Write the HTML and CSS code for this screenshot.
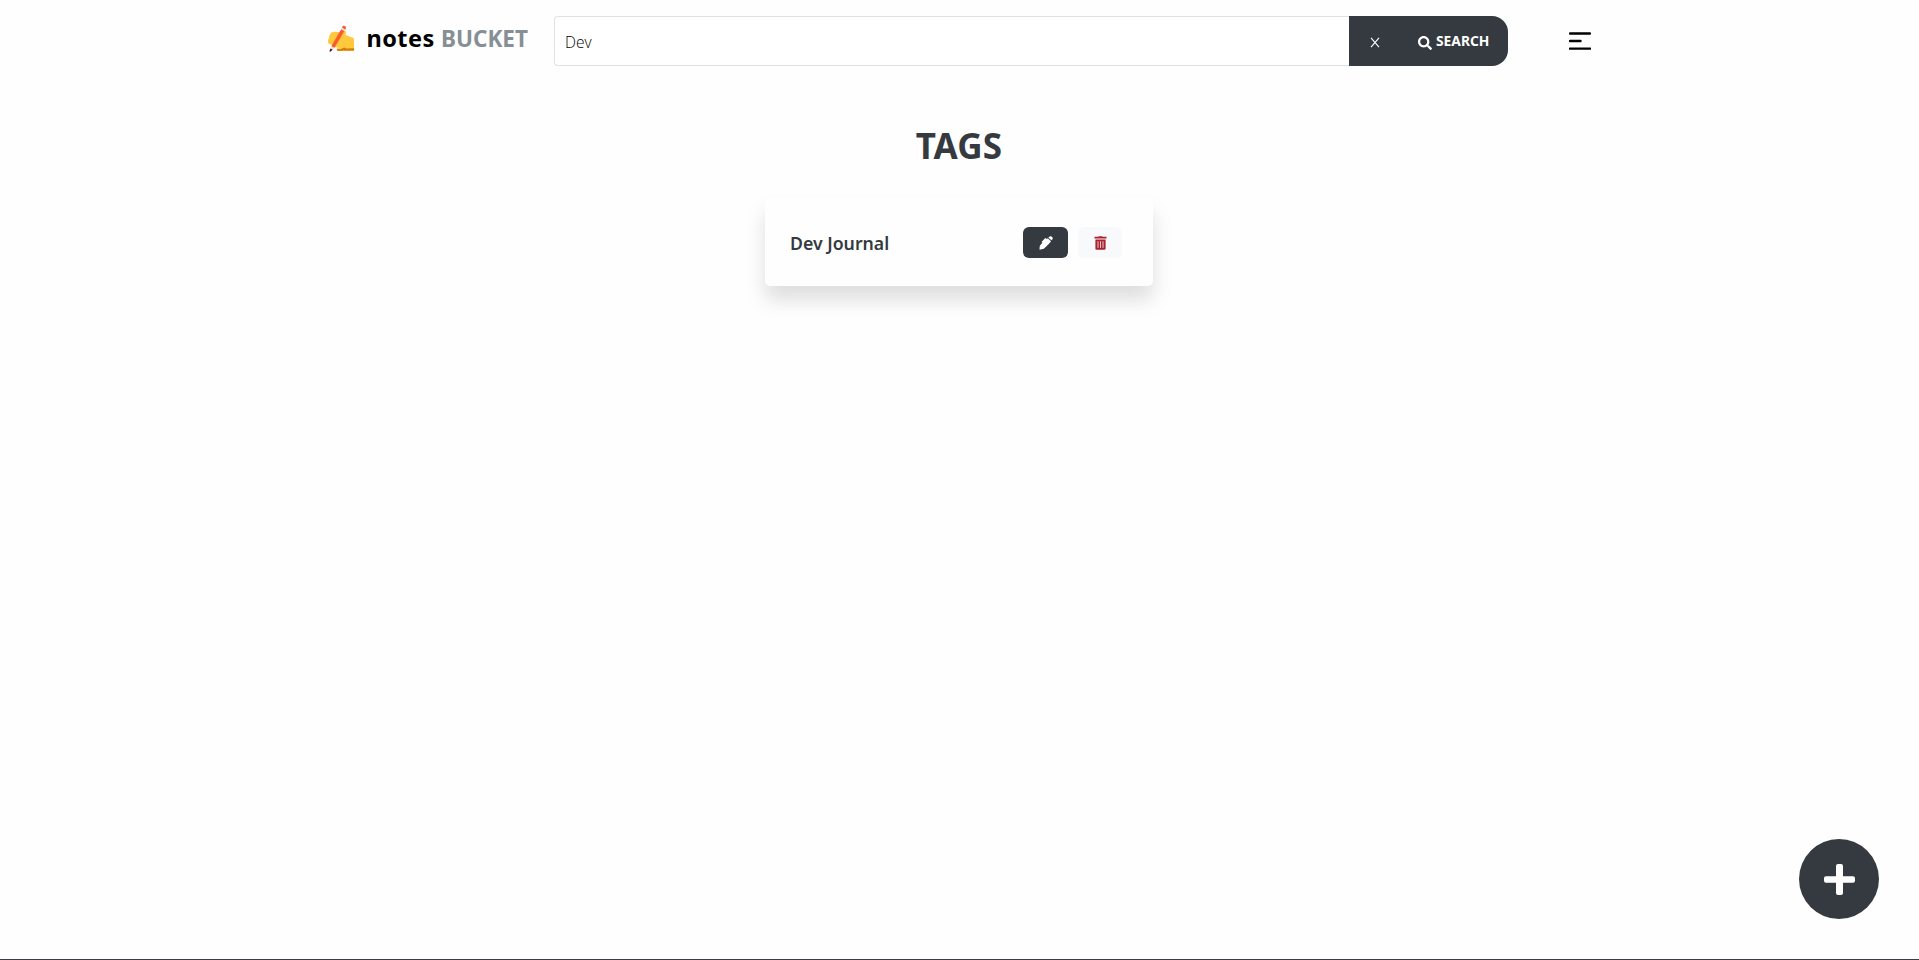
FILE: index.html
```html
<!DOCTYPE html>
<html lang="en">
<head>
<meta charset="utf-8">
<title>notes BUCKET</title>
<link rel="stylesheet" href="styles.css">
</head>
<body>
<header class="topbar">
  <a class="brand">
    <svg class="brand-icon" width="28" height="28" viewBox="0 0 28 28">
      <path fill="#ffc83d" d="M3.200 10.500C4 8 6 7.300 9 7.800l3.500.4L18.500 11l7.500 2.700c.8.500 1 1 1 2v10H19l-5 .3c-2 .2-3-1-2.500-2.300L8 23l-3.500-2.500C2.500 20.300.3 19 1.200 17.200.6 16.200 1.500 15 2 14.500c-.3-1.500.5-3 1.200-4z"/>
      <path fill="#ffc83d" d="M14 8.500l3-1.300c1.700-.6 2.500.4 2 1.800l-1 2.800z"/>
      <path fill="#d67d00" d="M27 24.300v2.500H16.500l-5 .2c-1.500 0-2.200-1.200-1.300-2.400l3 .6 4-1.800 2.300 1z"/>
      <path fill="#fc5a2b" d="M14.300 5l3.200 1.700L7.300 24l-3-1.700z"/>
      <path fill="#e3e3e3" d="M15 3.200l3.800 2-1.200 2-3.500-1.900z"/>
      <path fill="#fc5a2b" d="M15.200 2.900C16.200.7 19.600 1.900 18.900 4.500l-.5 1-3.600-1.900z"/>
      <path fill="#ffe1b8" d="M4.300 22.300l3 1.700-3.600 3.200-.9-.6z"/>
      <path fill="#321b41" d="M3.500 24.600l2.200 1.200L3.300 27.700l-.9-.5z"/>
    </svg>
    <span class="brand-name">notes</span>
    <span class="brand-sub">BUCKET</span>
  </a>
  <form class="search">
    <div class="search-input">Dev</div>
    <div class="search-actions">
      <svg class="clear" width="10" height="11" viewBox="0 0 10 11"><path d="M1 .8l8 9.400M9 .8L1 10.200" stroke="#fff" stroke-width="1.100"/></svg>
      <svg class="glass" width="14" height="14" viewBox="0 0 512 512"><path fill="#fff" d="M505 442.700L405.300 343c-4.500-4.500-10.600-7-17-7H372c27.600-35.300 44-79.700 44-128C416 93.100 322.900 0 208 0S0 93.100 0 208s93.100 208 208 208c48.300 0 92.700-16.400 128-44v16.300c0 6.400 2.500 12.500 7 17l99.700 99.700c9.400 9.400 24.600 9.400 33.900 0l28.300-28.300c9.400-9.400 9.400-24.600.1-34zM208 336c-70.700 0-128-57.200-128-128 0-70.700 57.200-128 128-128 70.700 0 128 57.200 128 128 0 70.700-57.200 128-128 128z"/></svg>
      <span class="search-label">SEARCH</span>
    </div>
  </form>
  <svg class="menu" width="22" height="19" viewBox="0 0 22 19"><path d="M1 1.500h20M1 9h10.500M1 16.600h20" stroke="#000" stroke-width="2.400" stroke-linecap="round"/></svg>
</header>
<main class="content">
  <h1 class="title">TAGS</h1>
  <section class="card">
    <span class="tag-name">Dev Journal</span>
    <button class="btn btn-edit" aria-label="Edit">
      <svg width="14" height="14" viewBox="0 0 14 14"><path fill="#fff" d="M9.400 1.700c1-1.800 2.800-2 3.800-.8 1 1.100.7 2.500-.7 3.400zM8.800 2.300l3.200 3C11.300 6.500 6.300 11.800 4.900 12.700L.5 13.700.7 10.300C1.300 8.900 3.500 6.700 4.800 5.600L3.600 6.800 2.500 5.900 6 2.300 7 2.200 7.900 2.900z"/></svg>
    </button>
    <button class="btn btn-delete" aria-label="Delete">
      <svg width="13" height="14" viewBox="0 0 13 14"><path fill="#a8232e" d="M4.300.8L5 .2h3l.7.6h3.800v1.800H.5V.8zM1.400 3.500h10.200v9c0 .8-.5 1.200-1.200 1.200H2.600c-.7 0-1.200-.4-1.200-1.200z"/><path d="M4 5.200v6.700M6.500 5.200v6.700M9 5.200v6.700" stroke="#e9c9cd"/></svg>
    </button>
  </section>
</main>
<button class="fab" aria-label="Add">
  <svg width="31" height="31" viewBox="0 0 31 31"><path fill="#fff" d="M14 0h3q2 0 2 2v10.200h10q2 0 2 2v2.600q0 2-2 2H19V29q0 2-2 2h-3q-2 0-2-2V18.800H2q-2 0-2-2v-2.600q0-2 2-2h10V2q0-2 2-2z"/></svg>
</button>
<footer class="base-line"></footer>
</body>
</html>
```
FILE: styles.css
```css
* { box-sizing: border-box; }
body {
  margin: 0;
  height: 960px;
  overflow: hidden;
  display: flex;
  flex-direction: column;
  background: #fefefe;
  color: #343a40;
  font-family: "Noto Sans", "Open Sans", sans-serif;
}
.topbar {
  display: flex;
  align-items: flex-start;
  padding: 16px 0 0 327px;
  height: 82px;
}
.brand {
  display: flex;
  align-items: center;
  width: 227px;
  height: 43px;
  font-size: 23.500px;
  font-weight: 700;
  white-space: nowrap;
}
.brand-icon { margin-top: 1px; }
.brand-name { margin-left: 11.500px; width: 74.500px; color: #000; letter-spacing: .45px; }
.brand-sub { padding-top: 2px; color: #868e96; font-size: 22.500px; }
.search { display: flex; width: 954px; height: 50px; }
.search-input {
  flex: 1;
  padding-left: 10px;
  border: 1px solid #dee2e6;
  border-right: 0;
  border-radius: 4px 0 0 4px;
  background: #fff;
  font-family: "Open Sans", sans-serif;
  font-size: 15.500px;
  font-weight: 300;
  line-height: 50px;
  color: #000;
}
.search-actions {
  display: flex;
  align-items: center;
  width: 159px;
  padding-left: 21px;
  border-radius: 0 16px 16px 0;
  background: #343a40;
  color: #fff;
}
.clear { margin-top: 3px; }
.glass { margin: 4px 0 0 38px; }
.search-label { margin: -1px 0 0 4px; font-size: 13.800px; font-weight: 700; }
.menu { margin: 16px 0 0 61px; }
.content { display: flex; flex-direction: column; align-items: center; flex: 1; padding-right: 1px; }
.title { margin: 39px 0 0; font-size: 35px; line-height: 49px; font-weight: 700; letter-spacing: .2px; }
.card {
  display: flex;
  align-items: center;
  width: 388px;
  height: 88px;
  margin-top: 28px;
  padding: 0 31px 0 25px;
  border-radius: 5px;
  background: #fefefe;
  box-shadow: 0 14px 20px rgba(0, 0, 0, .13);
}
.tag-name { flex: 1; padding-top: 2px; font-size: 17.700px; font-weight: 600; white-space: nowrap; }
.btn {
  display: flex;
  align-items: center;
  justify-content: center;
  height: 31px;
  padding: 2px 0 0;
  border: 0;
  border-radius: 6px;
}
.btn-edit { width: 45px; background: #343a40; }
.btn-delete { width: 44px; margin-left: 10px; background: #f8f9fa; }
.fab {
  display: flex;
  align-items: center;
  justify-content: center;
  align-self: flex-end;
  width: 80px;
  height: 80px;
  margin: 0 40px 40px 0;
  padding: 0;
  border: 0;
  border-radius: 50%;
  background: #343a40;
}
.base-line { height: 1px; background: #403947; }
```
